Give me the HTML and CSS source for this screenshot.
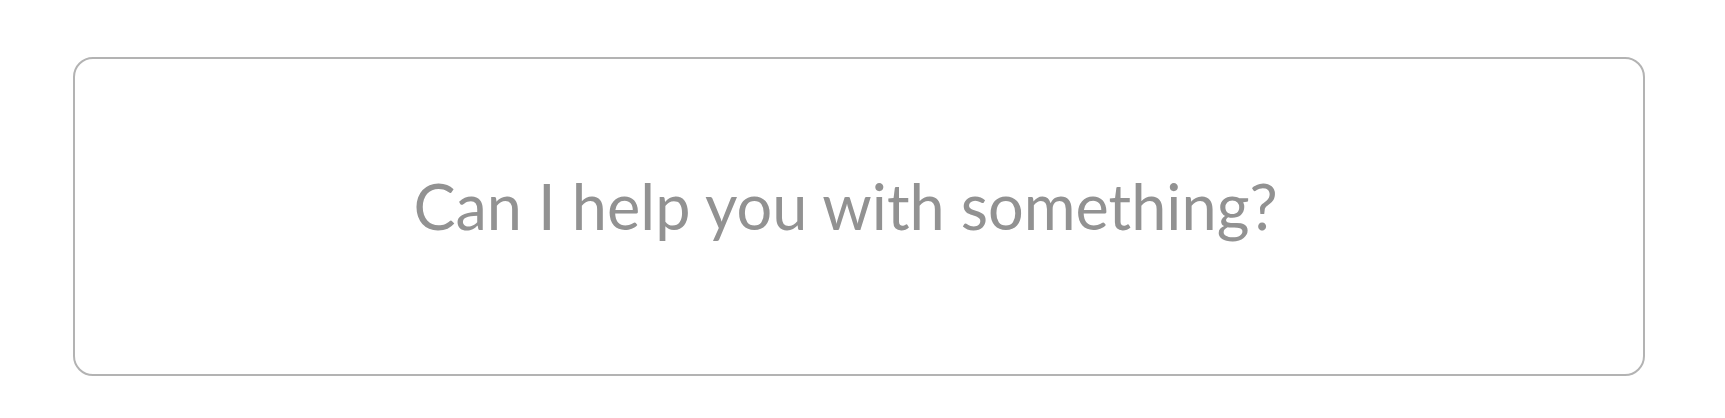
FILE: index.html
```html
<!DOCTYPE html>
<html lang="en">
<head>
<meta charset="utf-8">
<link rel="stylesheet" href="styles.css">
</head>
<body>
<main class="page">
  <div class="prompt-box">
    <p class="prompt-text">Can I help you with something?</p>
  </div>
</main>
</body>
</html>
```

FILE: styles.css
```css
html, body {
  margin: 0;
  padding: 0;
  background: #ffffff;
}
.page {
  padding: 57px 80px 0 73px;
}
.prompt-box {
  box-sizing: border-box;
  width: 1572px;
  height: 319px;
  border: 2px solid #b3b3b3;
  border-radius: 20px;
  display: flex;
  align-items: center;
  justify-content: center;
}
.prompt-text {
  margin: 0 0 22px -27px;
  font-family: "Lato", "Open Sans", sans-serif;
  font-size: 63px;
  color: #929292;
  line-height: 1;
}
```
